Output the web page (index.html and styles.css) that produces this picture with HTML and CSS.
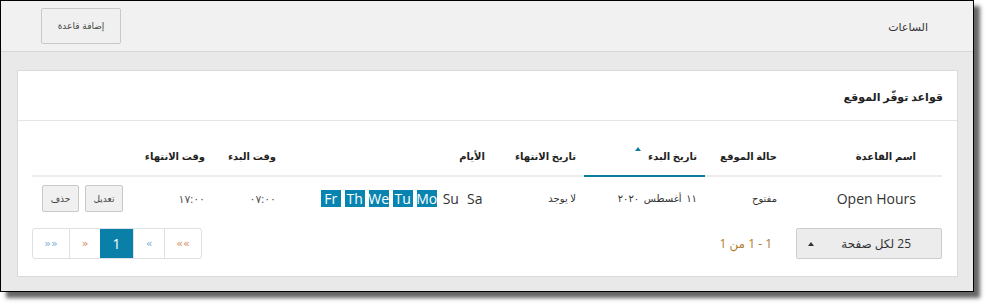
FILE: index.html
```html
<!DOCTYPE html>
<html lang="ar" dir="rtl">
<head>
<meta charset="utf-8">
<title>الساعات</title>
<link rel="stylesheet" href="styles.css">
</head>
<body>
<div class="frame">
  <div class="topbar">
    <div class="page-title">الساعات</div>
    <button class="btn btn-add">إضافة قاعدة</button>
  </div>
  <div class="main">
    <div class="card">
      <div class="card-head">قواعد توفّر الموقع</div>
      <div class="card-body">
        <table class="grid">
          <colgroup>
            <col class="c1"><col class="c2"><col class="c3"><col class="c4"><col class="c5"><col class="c6"><col class="c7"><col class="c8">
          </colgroup>
          <thead>
            <tr>
              <th class="first">اسم القاعدة</th>
              <th>حالة الموقع</th>
              <th class="sorted">تاريخ البدء<span class="sort-arrow"></span></th>
              <th>تاريخ الانتهاء</th>
              <th>الأيام</th>
              <th>وقت البدء</th>
              <th>وقت الانتهاء</th>
              <th></th>
            </tr>
          </thead>
          <tbody>
            <tr>
              <td class="first latin">Open Hours</td>
              <td>مفتوح</td>
              <td class="date">١١ أغسطس ٢٠٢٠</td>
              <td>لا يوجد</td>
              <td>
                <div class="days">
                  <span class="day">Sa</span>
                  <span class="day">Su</span>
                  <span class="day on">Mo</span>
                  <span class="day on">Tu</span>
                  <span class="day on">We</span>
                  <span class="day on">Th</span>
                  <span class="day on">Fr</span>
                </div>
              </td>
              <td class="time">٠٧:٠٠</td>
              <td class="time">١٧:٠٠</td>
              <td>
                <div class="actions">
                  <button class="btn btn-sm">تعديل</button>
                  <button class="btn btn-sm">حذف</button>
                </div>
              </td>
            </tr>
          </tbody>
        </table>
        <div class="pager-row">
          <div class="page-size"><span class="ps-text">25 لكل صفحة</span><span class="caret"></span></div>
          <div class="page-info">1 - 1 من 1</div>
          <div class="spacer"></div>
          <div class="pager">
            <span class="pg pg-o">»»</span>
            <span class="pg pg-b">»</span>
            <span class="pg active">1</span>
            <span class="pg pg-o">«</span>
            <span class="pg pg-b">««</span>
          </div>
        </div>
      </div>
    </div>
  </div>
</div>
</body>
</html>
```

FILE: styles.css
```css
html, body {
  margin: 0;
  padding: 0;
  background: #ffffff;
}

body {
  font-family: "Open Sans", "DejaVu Sans", sans-serif;
  color: #333;
  width: 989px;
  height: 307px;
  overflow: hidden;
}

.frame {
  width: 972px;
  height: 290px;
  margin-left: 0;
  margin-right: auto;
  border: 1px solid #000;
  background: #e9e9e9;
  box-shadow: 6px 6px 4px rgba(0, 0, 0, 0.6);
  display: flex;
  flex-direction: column;
}

.topbar {
  height: 50px;
  background: #f1f1f1;
  border-bottom: 1px solid #d6d6d6;
  display: flex;
  justify-content: space-between;
  align-items: flex-start;
  padding: 0 45px 0 40px;
}

.page-title {
  font-size: 11px;
  line-height: 14px;
  margin-top: 19px;
  color: #333;
}

.btn {
  font-family: "DejaVu Sans", sans-serif;
  background: #f0f0f0;
  border: 1px solid #c9c9c9;
  border-radius: 2px;
  color: #444;
  padding: 0;
  cursor: pointer;
}

.btn-add {
  width: 80px;
  height: 36px;
  margin-top: 7px;
  font-size: 9px;
}

.main {
  flex: 1;
  padding: 18px 15px 0 16px;
}

.card {
  background: #fff;
  border: 1px solid #dadada;
  height: 205px;
}

.card-head {
  border-bottom: 1px solid #e5e5e5;
  padding-right: 14px;
  font-size: 11px;
  font-weight: bold;
  line-height: 14px;
  padding-top: 19px;
  box-sizing: border-box;
  height: 50px;
  color: #222;
}

.card-body {
  padding: 20px 15px 0 14px;
}

.grid {
  width: 910px;
  border-collapse: collapse;
  table-layout: fixed;
}

.c1 { width: 157px; }
.c2 { width: 80px; }
.c3 { width: 121px; }
.c4 { width: 91px; }
.c5 { width: 209px; }
.c6 { width: 71px; }
.c7 { width: 82px; }
.c8 { width: 99px; }

.grid th {
  text-align: right;
  font-size: 10px;
  font-weight: bold;
  line-height: 14px;
  height: 14px;
  padding: 8px 8px 12px 0;
  border-bottom: 2px solid #ececec;
  color: #222;
  white-space: nowrap;
}

.grid th.first,
.grid td.first {
  padding-right: 26px;
}

.grid th.sorted {
  border-bottom-color: #0b7b9e;
}

.sort-arrow {
  display: inline-block;
  width: 0;
  height: 0;
  border-left: 3px solid transparent;
  border-right: 3px solid transparent;
  border-bottom: 4px solid #0b7fa5;
  margin-right: 7px;
  vertical-align: middle;
  position: relative;
  top: -8px;
}

.grid td {
  text-align: right;
  font-size: 10px;
  line-height: 27px;
  height: 27px;
  padding: 8px 8px 8px 0;
  color: #333;
  white-space: nowrap;
}

.grid td.latin {
  font-family: "Open Sans", sans-serif;
  font-size: 14px;
}

.grid td.date {
  word-spacing: 2px;
  letter-spacing: 0.3px;
}

.grid td.time {
  color: #555;
  font-size: 11px;
  letter-spacing: 3px;
}

.days {
  display: flex;
  gap: 3.5px;
  align-items: center;
  height: 27px;
}

.day {
  font-family: "Open Sans", sans-serif;
  width: 20.5px;
  height: 17px;
  line-height: 17px;
  font-size: 14px;
  text-align: center;
  color: #333;
  white-space: nowrap;
  overflow: visible;
  display: flex;
  justify-content: center;
}

.day.on {
  background: #0784b0;
  color: #fff;
}

.actions {
  display: flex;
  gap: 6px;
  justify-content: flex-start;
}

.btn-sm {
  width: 38px;
  height: 27px;
  font-size: 9px;
}

.btn-sm + .btn-sm {
  width: 37px;
}

.pager-row {
  display: flex;
  align-items: center;
  margin-top: 8px;
  height: 31px;
}

.page-size {
  width: 146px;
  height: 31px;
  box-sizing: border-box;
  background: #ececec;
  border: 1px solid #cdcdcd;
  border-radius: 2px;
  display: flex;
  justify-content: space-between;
  align-items: center;
  padding: 0 30px 0 11px;
  font-size: 12px;
  color: #333;
}

.caret {
  width: 0;
  height: 0;
  border-left: 3px solid transparent;
  border-right: 3px solid transparent;
  border-bottom: 4px solid #333;
}

.page-info {
  margin-right: 24px;
  font-size: 12px;
  color: #b07a2c;
}

.spacer {
  flex: 1;
}

.pager {
  direction: rtl;
  display: flex;
  height: 31px;
  box-sizing: border-box;
  border: 1px solid #dde0e5;
  border-radius: 3px;
  overflow: hidden;
}

.pg {
  font-family: "DejaVu Sans", sans-serif;
  display: flex;
  align-items: center;
  justify-content: center;
  font-size: 11px;
  border-left: 1px solid #dde0e5;
  height: 29px;
}

.pg:last-child {
  border-left: 0;
}

.pg:nth-child(1) { width: 36px; }
.pg:nth-child(2) { width: 30px; }
.pg:nth-child(3) { width: 33px; border-left: 0; }
.pg:nth-child(4) { width: 30px; }
.pg:nth-child(5) { width: 36px; }

.pg-o { color: #d98a5c; }
.pg-b { color: #7eaed6; }

.pg.active {
  background: #0a7fa8;
  color: #fff;
  font-family: "Open Sans", sans-serif;
  font-size: 14px;
}
```
